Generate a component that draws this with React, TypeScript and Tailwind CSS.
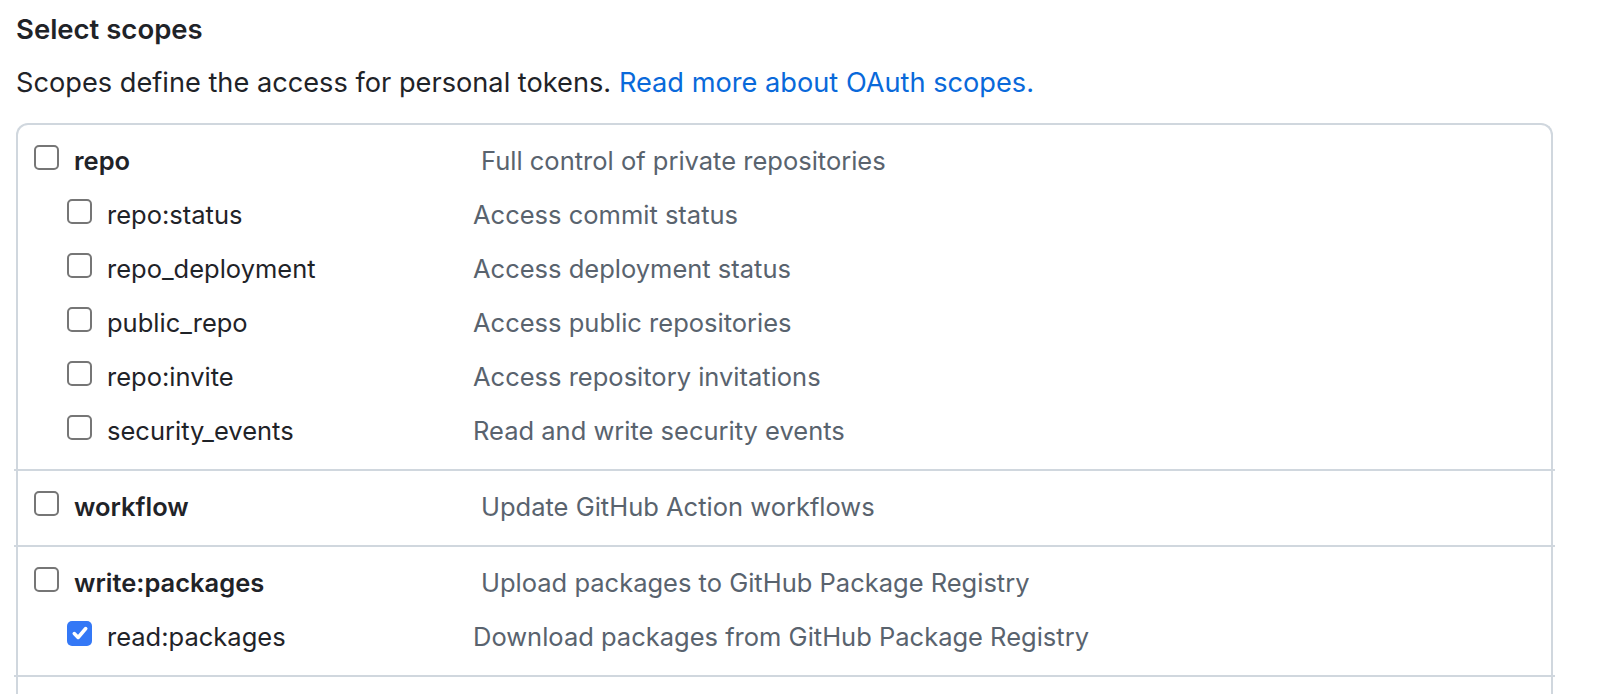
type Scope = {
  name: string;
  description: string;
  checked?: boolean;
  children?: Scope[];
};

const scopes: Scope[] = [
  {
    name: "repo",
    description: "Full control of private repositories",
    children: [
      { name: "repo:status", description: "Access commit status" },
      { name: "repo_deployment", description: "Access deployment status" },
      { name: "public_repo", description: "Access public repositories" },
      { name: "repo:invite", description: "Access repository invitations" },
      { name: "security_events", description: "Read and write security events" },
    ],
  },
  { name: "workflow", description: "Update GitHub Action workflows" },
  {
    name: "write:packages",
    description: "Upload packages to GitHub Package Registry",
    children: [
      {
        name: "read:packages",
        description: "Download packages from GitHub Package Registry",
        checked: true,
      },
    ],
  },
];

function Checkbox({ checked }: { checked?: boolean }) {
  if (checked) {
    return (
      <span className="mb-[8px] flex h-[25px] w-[25px] shrink-0 items-center justify-center rounded-[5px] bg-[#3478f6]">
        <svg viewBox="0 0 16 16" className="h-[20px] w-[20px]" fill="none">
          <path
            d="M3.4 8.4 L6.5 11.6 L12.6 4.4"
            stroke="white"
            strokeWidth="2.8"
            strokeLinecap="round"
            strokeLinejoin="round"
          />
        </svg>
      </span>
    );
  }
  return (
    <span className="mb-[8px] block h-[25px] w-[25px] shrink-0 rounded-[5px] border-2 border-[#767676] bg-white" />
  );
}

function ScopeRow({ scope, child }: { scope: Scope; child?: boolean }) {
  return (
    <div className={`flex h-[54px] items-center ${child ? "pl-[49px]" : "pl-[16px]"}`}>
      <div className={`flex items-center gap-[15px] ${child ? "w-[406px]" : "w-[447px]"}`}>
        <Checkbox checked={scope.checked} />
        <span className={child ? "text-[#1f2328]" : "font-semibold text-[#1f2328]"}>
          {scope.name}
        </span>
      </div>
      <span className="text-[#59636e]">{scope.description}</span>
    </div>
  );
}

export default function App() {
  return (
    <div
      className="min-h-screen bg-white pl-[16px] pr-[69px]"
      style={{ fontFamily: "Inter, 'Noto Sans', sans-serif" }}
    >
      <h3 className="pt-[9px] text-[27.5px] leading-[40px] font-semibold text-[#1f2328]">
        Select scopes
      </h3>
      <p className="mt-[14px] text-[27.2px] leading-[40px] text-[#1f2328]">
        Scopes define the access for personal tokens.{" "}
        <a className="text-[#0969da]">Read more about OAuth scopes.</a>
      </p>

      <div className="mt-[20px] rounded-t-[12px] border-x-2 border-t-2 border-[#d0d7de] text-[25.5px] leading-[36px]">
        {scopes.map((scope, i) => (
          <div key={scope.name}>
            {i > 0 && <div className="-mx-[4px] h-[2px] bg-[#d0d7de]" />}
            <div className="pt-[9px] pb-[11px]">
              <ScopeRow scope={scope} />
              {scope.children?.map((c) => (
                <ScopeRow key={c.name} scope={c} child />
              ))}
            </div>
          </div>
        ))}
        <div className="-mx-[4px] h-[2px] bg-[#d0d7de]" />
        <div className="h-[60px]" />
      </div>
    </div>
  );
}
